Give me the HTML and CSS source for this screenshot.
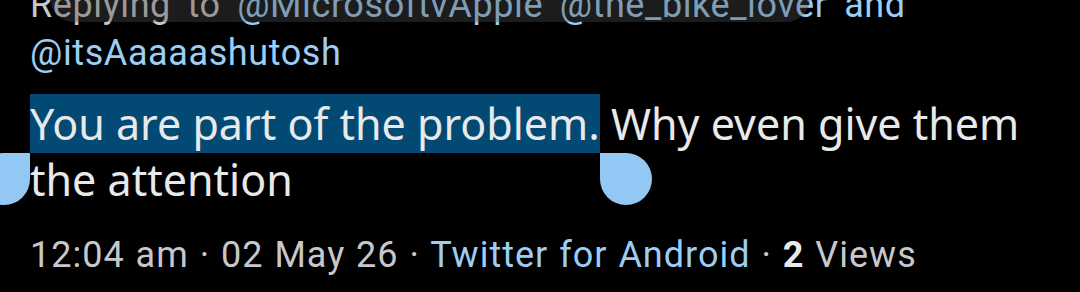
FILE: index.html
```html
<!DOCTYPE html>
<html lang="en">
<head>
  <meta charset="UTF-8" />
  <meta name="viewport" content="width=device-width, initial-scale=1.0"/>
  <title>Tweet</title>
  <link rel="stylesheet" href="styles.css">
</head>
<body>
  <main class="tweet">
    <p class="reply">
      <span class="reply-shade"></span>
      Replying to <a href="#">@MicrosoftvApple</a> <a href="#">@the_bike_lover</a> <a href="#">and</a><br>
      <a href="#">@itsAaaaashutosh</a>
    </p>

    <p class="tweet-text"><span class="selected">You are part of the problem.<span class="handle handle-left"></span><span class="handle handle-right"></span></span> Why even give them the attention</p>

    <p class="meta">
      <span>12:04 am</span> · <span>02 May 26</span> · <a href="#">Twitter for Android</a> · <strong>2</strong> Views
    </p>
  </main>
</body>
</html>
```

FILE: styles.css
```css
body {
  margin: 0;
  padding: 0;
  background-color: #000;
  overflow: hidden;
}

.tweet {
  padding: 0 30px;
}

.tweet a {
  color: #9ccdf5;
  text-decoration: none;
}

.reply {
  position: relative;
  margin: -19px 0 0;
  font-family: Roboto, "Liberation Sans", sans-serif;
  font-size: 36px;
  line-height: 48px;
  letter-spacing: 0.6px;
  word-spacing: 7px;
  color: #c8c8c8;
}

.reply-shade {
  position: absolute;
  left: 20px;
  top: -20px;
  width: 760px;
  height: 61px;
  background-color: rgba(77, 77, 77, 0.37);
  border-radius: 0 0 24px 24px;
}

.tweet-text {
  margin: 19px 0 0;
  font-family: "Noto Sans", "Open Sans", sans-serif;
  font-size: 43px;
  line-height: 56px;
  color: #e7e9ea;
}

.selected {
  position: relative;
  background-color: #024a73;
}

.handle {
  position: absolute;
  top: 100%;
  width: 52px;
  height: 52px;
  background-color: #93c8f5;
}

.handle-left {
  right: 100%;
  border-radius: 50% 0 50% 50%;
}

.handle-right {
  left: 100%;
  border-radius: 0 50% 50% 50%;
}

.meta {
  margin: 23px 0 0;
  font-family: Roboto, "Liberation Sans", sans-serif;
  font-size: 36px;
  line-height: 48px;
  letter-spacing: 1px;
  word-spacing: 1px;
  color: #c6c8cb;
}

.meta strong {
  color: #e7e9ea;
}
```
